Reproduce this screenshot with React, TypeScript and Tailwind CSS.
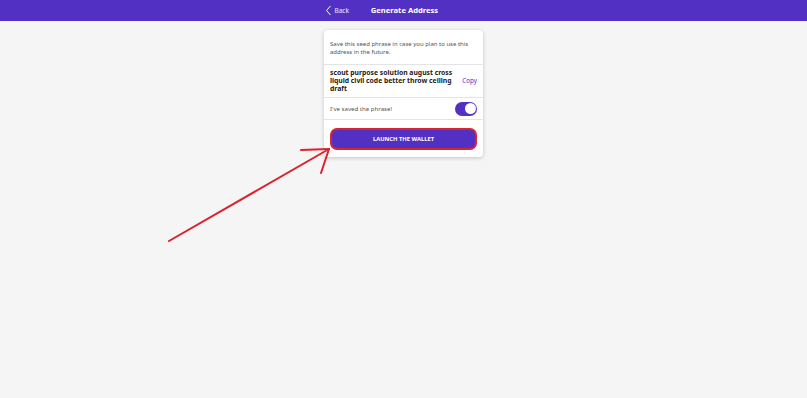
import React from 'react';

export default function App() {
  return (
    <div className="relative min-h-[398px] w-full bg-[#f5f5f5] font-['Noto_Sans',sans-serif] text-[#333]">
      {/* header */}
      <div className="flex h-[21px] items-center justify-center bg-[#5330c4]">
        <div className="relative flex w-[158px] items-center justify-center">
          <div className="absolute left-0 flex items-center gap-[3px] text-[6.5px] text-white/90">
            <svg width="7" height="11" viewBox="0 0 7 11" fill="none">
              <path d="M5.5 1 L1.5 5.5 L5.5 10" stroke="white" strokeWidth="1" />
            </svg>
            <span>Back</span>
          </div>
          <span className="ml-[2px] text-[7.6px] font-bold text-white">Generate Address</span>
        </div>
      </div>

      {/* card */}
      <div className="mx-auto mt-[9px] w-[159px] rounded-[4px] bg-white shadow-[0_1px_4px_rgba(0,0,0,0.2)]">
        <div className="px-[6px] pt-[10px] pb-[8px] text-[6px] leading-[8px] text-[#555]">
          Save this seed phrase in case you plan to use this address in the future.
        </div>
        <div className="border-t border-[#e4e4e4]" />
        <div className="flex h-[32px] items-center justify-between px-[6px]">
          <div className="w-[130px] text-[6.8px] font-bold leading-[8px] text-[#222]">
            scout purpose solution august cross liquid civil code better throw ceiling draft
          </div>
          <span className="text-[6.3px] text-[#5330c4]">Copy</span>
        </div>
        <div className="border-t border-[#e4e4e4]" />
        <div className="flex h-[21px] items-center justify-between px-[6px]">
          <span className="text-[6.1px] text-[#555]">I've saved the phrase!</span>
          <div className="flex h-[14px] w-[22px] items-center justify-end rounded-full bg-[#5330c4] px-[1.5px]">
            <div className="h-[11px] w-[11px] rounded-full bg-white" />
          </div>
        </div>
        <div className="border-t border-[#e4e4e4]" />
        <div className="px-[6px] pt-[8px] pb-[7px]">
          <div className="flex h-[22px] items-center justify-center rounded-[7px] border-2 border-[#d9232e] bg-[#5330c4] text-[5.8px] font-bold text-white">
            LAUNCH THE WALLET
          </div>
        </div>
      </div>

      {/* annotation arrow */}
      <svg className="pointer-events-none absolute left-0 top-0" width="807" height="398" viewBox="0 0 807 398">
        <g stroke="#d9232e" strokeWidth="2" fill="none" strokeLinecap="round">
          <line x1="169" y1="241" x2="329" y2="149" />
          <line x1="301" y1="150" x2="329" y2="149" />
          <line x1="321" y1="173" x2="329" y2="149" />
        </g>
      </svg>
    </div>
  );
}
